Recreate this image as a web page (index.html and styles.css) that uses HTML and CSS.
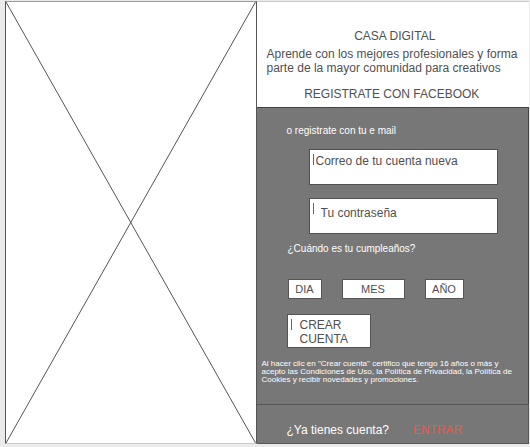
FILE: index.html
```
<!DOCTYPE html>
<html lang="es">
<head>
<meta charset="utf-8">
<meta name="viewport" content="width=device-width, initial-scale=1">
<title>Casa Digital</title>
<link rel="stylesheet" href="styles.css">
</head>
<body>
<main class="page">
  <svg class="image-slot" viewBox="0 0 100 100" preserveAspectRatio="none" aria-hidden="true">
    <path d="M0 0L100 100M0 100L100 0"/>
  </svg>
  <div class="panel">
    <header class="intro">
      <h1 class="title">CASA DIGITAL</h1>
      <p class="tagline">Aprende con los mejores profesionales y forma parte de la mayor comunidad para creativos</p>
      <button class="facebook" type="button">REGISTRATE CON FACEBOOK</button>
    </header>
    <form class="signup">
      <label class="label" for="email">o registrate con tu e mail</label>
      <div class="field caret">
        <input class="input" id="email" type="email" placeholder="Correo de tu cuenta nueva">
      </div>
      <div class="field caret">
        <input class="input input-inset" type="password" placeholder="Tu contraseña" aria-label="Tu contraseña">
      </div>
      <fieldset class="birthday">
        <legend class="label">¿Cuándo es tu cumpleaños?</legend>
        <div class="dates">
          <select class="select day" aria-label="Dia"><option>DIA</option></select>
          <select class="select month" aria-label="Mes"><option>MES</option></select>
          <select class="select year" aria-label="Año"><option>AÑO</option></select>
        </div>
      </fieldset>
      <button class="submit caret" type="submit">CREAR CUENTA</button>
      <p class="legal">Al hacer clic en "Crear cuenta" certifico que tengo 16 años o más y acepto las Condiciones de Uso, la Política de Privacidad, la Política de Cookies y recibir novedades y promociones.</p>
    </form>
    <footer class="footer">
      <span>¿Ya tienes cuenta?</span>
      <a class="enter" href="#">ENTRAR</a>
    </footer>
  </div>
</main>
</body>
</html>
```
FILE: styles.css
```
* {
  box-sizing: border-box;
}

body {
  margin: 0;
  min-height: 100vh;
  padding: 1px 0 3px 5px;
  display: flex;
  background: #ebebeb;
  color: #505050;
  font: 12px/14px "Liberation Sans", Arial, sans-serif;
}

h1,
p,
fieldset,
legend {
  margin: 0;
  padding: 0;
  border: 0;
}

button,
input,
select {
  border: 0;
  border-radius: 0;
  margin: 0;
  padding: 0;
  color: inherit;
  font: inherit;
}

.page {
  flex: 1;
  display: grid;
  grid-template-columns: 12fr 13fr;
  margin-right: 1px;
  background: #fff;
}

.image-slot {
  width: 100%;
  height: 100%;
  min-height: 0;
  contain: size;
  border: 1px solid #555;
  border-top-color: #999;
  border-bottom-color: #ccc;
}

.image-slot path {
  fill: none;
  stroke: #555;
  stroke-width: 1px;
  vector-effect: non-scaling-stroke;
}

.panel {
  display: flex;
  flex-direction: column;
  border-top: 1px solid #ccc;
}

.intro {
  display: flex;
  flex-direction: column;
  align-items: center;
  padding: 27px 6px 6px 10px;
}

.title {
  font-size: 12px;
  font-weight: 400;
}

.tagline {
  align-self: stretch;
  padding: 4px 0 12px;
}

.facebook {
  margin-right: 6px;
  background: none;
}

.signup {
  flex: 1;
  display: flex;
  flex-direction: column;
  align-items: flex-start;
  padding: 16px 0 0 30px;
  border-top: 1px solid #444;
  border-right: 1px solid #444;
  background: #777;
  color: #505050;
}

.label {
  color: #fff;
  font-size: 10px;
  line-height: 14px;
}

.field {
  align-self: stretch;
  height: 36px;
  margin: 11px 30px 2px 22px;
  border: 1px solid #505050;
  background: #fff;
}

.caret {
  position: relative;
}

.caret::before {
  content: "";
  position: absolute;
  top: 4px;
  left: 3px;
  width: 1px;
  height: 11px;
  background: #666;
}

.input {
  display: block;
  width: 100%;
  height: 22px;
  padding-left: 6px;
  background: none;
}

.input-inset {
  height: 28px;
  padding-left: 11px;
}

.input::placeholder {
  color: #505050;
  opacity: 1;
}

.birthday {
  padding: 6px 0 0 1px;
}

.birthday .label {
  padding-top: 6px;
}

.dates {
  display: flex;
  gap: 20px;
  padding-top: 17px;
}

.select {
  appearance: none;
  height: 20px;
  border: 1px solid #555;
  background: #fff;
  font-size: 11px;
  text-align: center;
}

.day {
  width: 34px;
}

.month {
  width: 63px;
}

.year {
  width: 39px;
}

.submit {
  width: 84px;
  margin-top: 15px;
  padding: 3px 12px 1px;
  border: 1px solid #555;
  background: #fff;
  text-align: left;
}

.legal {
  margin: 12px 6px 20px -25px;
  color: #fff;
  font-size: 8px;
  line-height: 8px;
}

.footer {
  display: flex;
  gap: 24px;
  padding: 18px 0 6px 30px;
  border: 1px solid #555;
  border-left: 0;
  background: #777;
  color: #fff;
}

.enter {
  color: #e0604c;
  text-decoration: none;
}
```
